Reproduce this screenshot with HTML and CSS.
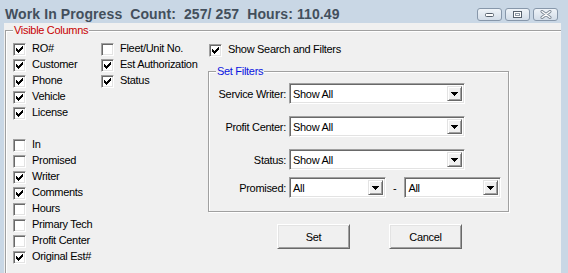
FILE: index.html
```html
<!DOCTYPE html>
<html lang="en">
<head>
    <meta charset="UTF-8">
    <title>Work In Progress</title>
    <link rel="stylesheet" href="styles.css">
</head>
<body>
<div class="window">
    <!-- title bar -->
    <div class="title-bar">
        <div class="title">Work In Progress  Count:  257/ 257  Hours: 110.49</div>
        <div class="win-buttons">
            <div class="win-btn">
                <svg width="9" height="4" viewBox="0 0 9 4"><rect x="0.5" y="0.5" width="8" height="3" rx="1" fill="#fff" stroke="#56616d"/></svg>
            </div>
            <div class="win-btn">
                <svg width="9" height="7" viewBox="0 0 9 7"><rect x="0.5" y="0.5" width="8" height="6" fill="#fff" stroke="#56616d"/><rect x="2.5" y="2.5" width="4" height="2" fill="none" stroke="#8d98a4"/></svg>
            </div>
            <div class="win-btn">
                <svg width="12" height="9" viewBox="0 0 12 9"><path d="M2 1.5L10 7.5M10 1.5L2 7.5" stroke="#7b8794" stroke-width="3" stroke-linecap="round"/><path d="M2 1.5L10 7.5M10 1.5L2 7.5" stroke="#fff" stroke-width="1.3" stroke-linecap="round"/></svg>
            </div>
        </div>
    </div>

    <div class="panel">
        <div class="group visible-columns">
            <span class="group-title red">Visible Columns</span>

            <div class="col col-main">
                <div class="check-row"><span class="chk"><svg class="tick" viewBox="0 0 7 7"><path d="M6 0h1v1h-1z M5 1h2v1h-2z M0 2h1v1h-1z M4 2h3v1h-3z M0 3h2v1h-2z M3 3h3v1h-3z M0 4h5v1h-5z M1 5h3v1h-3z M2 6h1v1h-1z"/></svg></span><span class="lbl">RO#</span></div>
                <div class="check-row"><span class="chk"><svg class="tick" viewBox="0 0 7 7"><path d="M6 0h1v1h-1z M5 1h2v1h-2z M0 2h1v1h-1z M4 2h3v1h-3z M0 3h2v1h-2z M3 3h3v1h-3z M0 4h5v1h-5z M1 5h3v1h-3z M2 6h1v1h-1z"/></svg></span><span class="lbl">Customer</span></div>
                <div class="check-row"><span class="chk"><svg class="tick" viewBox="0 0 7 7"><path d="M6 0h1v1h-1z M5 1h2v1h-2z M0 2h1v1h-1z M4 2h3v1h-3z M0 3h2v1h-2z M3 3h3v1h-3z M0 4h5v1h-5z M1 5h3v1h-3z M2 6h1v1h-1z"/></svg></span><span class="lbl">Phone</span></div>
                <div class="check-row"><span class="chk"><svg class="tick" viewBox="0 0 7 7"><path d="M6 0h1v1h-1z M5 1h2v1h-2z M0 2h1v1h-1z M4 2h3v1h-3z M0 3h2v1h-2z M3 3h3v1h-3z M0 4h5v1h-5z M1 5h3v1h-3z M2 6h1v1h-1z"/></svg></span><span class="lbl">Vehicle</span></div>
                <div class="check-row"><span class="chk"><svg class="tick" viewBox="0 0 7 7"><path d="M6 0h1v1h-1z M5 1h2v1h-2z M0 2h1v1h-1z M4 2h3v1h-3z M0 3h2v1h-2z M3 3h3v1h-3z M0 4h5v1h-5z M1 5h3v1h-3z M2 6h1v1h-1z"/></svg></span><span class="lbl">License</span></div>
                <div class="check-row blank"></div>
                <div class="check-row"><span class="chk"></span><span class="lbl">In</span></div>
                <div class="check-row"><span class="chk"></span><span class="lbl">Promised</span></div>
                <div class="check-row"><span class="chk"><svg class="tick" viewBox="0 0 7 7"><path d="M6 0h1v1h-1z M5 1h2v1h-2z M0 2h1v1h-1z M4 2h3v1h-3z M0 3h2v1h-2z M3 3h3v1h-3z M0 4h5v1h-5z M1 5h3v1h-3z M2 6h1v1h-1z"/></svg></span><span class="lbl">Writer</span></div>
                <div class="check-row"><span class="chk"><svg class="tick" viewBox="0 0 7 7"><path d="M6 0h1v1h-1z M5 1h2v1h-2z M0 2h1v1h-1z M4 2h3v1h-3z M0 3h2v1h-2z M3 3h3v1h-3z M0 4h5v1h-5z M1 5h3v1h-3z M2 6h1v1h-1z"/></svg></span><span class="lbl">Comments</span></div>
                <div class="check-row"><span class="chk"></span><span class="lbl">Hours</span></div>
                <div class="check-row"><span class="chk"></span><span class="lbl">Primary Tech</span></div>
                <div class="check-row"><span class="chk"></span><span class="lbl">Profit Center</span></div>
                <div class="check-row"><span class="chk"><svg class="tick" viewBox="0 0 7 7"><path d="M6 0h1v1h-1z M5 1h2v1h-2z M0 2h1v1h-1z M4 2h3v1h-3z M0 3h2v1h-2z M3 3h3v1h-3z M0 4h5v1h-5z M1 5h3v1h-3z M2 6h1v1h-1z"/></svg></span><span class="lbl">Original Est#</span></div>
            </div>

            <div class="col col-extra">
                <div class="check-row"><span class="chk"></span><span class="lbl">Fleet/Unit No.</span></div>
                <div class="check-row"><span class="chk"><svg class="tick" viewBox="0 0 7 7"><path d="M6 0h1v1h-1z M5 1h2v1h-2z M0 2h1v1h-1z M4 2h3v1h-3z M0 3h2v1h-2z M3 3h3v1h-3z M0 4h5v1h-5z M1 5h3v1h-3z M2 6h1v1h-1z"/></svg></span><span class="lbl">Est Authorization</span></div>
                <div class="check-row"><span class="chk"><svg class="tick" viewBox="0 0 7 7"><path d="M6 0h1v1h-1z M5 1h2v1h-2z M0 2h1v1h-1z M4 2h3v1h-3z M0 3h2v1h-2z M3 3h3v1h-3z M0 4h5v1h-5z M1 5h3v1h-3z M2 6h1v1h-1z"/></svg></span><span class="lbl">Status</span></div>
            </div>

            <div class="col col-filters">
                <div class="check-row show-search"><span class="chk"><svg class="tick" viewBox="0 0 7 7"><path d="M6 0h1v1h-1z M5 1h2v1h-2z M0 2h1v1h-1z M4 2h3v1h-3z M0 3h2v1h-2z M3 3h3v1h-3z M0 4h5v1h-5z M1 5h3v1h-3z M2 6h1v1h-1z"/></svg></span><span class="lbl">Show Search and Filters</span></div>

                <div class="group set-filters">
                    <span class="group-title blue">Set Filters</span>
                    <div class="filter-row">
                        <label>Service Writer:</label>
                        <div class="combo"><span class="value">Show All</span><span class="arrow"><svg width="7" height="4" viewBox="0 0 7 4"><path d="M0 0h7v1H0z M1 1h5v1H1z M2 2h3v1H2z M3 3h1v1H3z"/></svg></span></div>
                    </div>
                    <div class="filter-row">
                        <label>Profit Center:</label>
                        <div class="combo"><span class="value">Show All</span><span class="arrow"><svg width="7" height="4" viewBox="0 0 7 4"><path d="M0 0h7v1H0z M1 1h5v1H1z M2 2h3v1H2z M3 3h1v1H3z"/></svg></span></div>
                    </div>
                    <div class="filter-row">
                        <label>Status:</label>
                        <div class="combo"><span class="value">Show All</span><span class="arrow"><svg width="7" height="4" viewBox="0 0 7 4"><path d="M0 0h7v1H0z M1 1h5v1H1z M2 2h3v1H2z M3 3h1v1H3z"/></svg></span></div>
                    </div>
                    <div class="filter-row dates">
                        <label>Promised:</label>
                        <div class="combo short"><span class="value">All</span><span class="arrow"><svg width="7" height="4" viewBox="0 0 7 4"><path d="M0 0h7v1H0z M1 1h5v1H1z M2 2h3v1H2z M3 3h1v1H3z"/></svg></span></div>
                        <span class="dash">-</span>
                        <div class="combo short"><span class="value">All</span><span class="arrow"><svg width="7" height="4" viewBox="0 0 7 4"><path d="M0 0h7v1H0z M1 1h5v1H1z M2 2h3v1H2z M3 3h1v1H3z"/></svg></span></div>
                    </div>
                </div>

                <div class="actions">
                    <button class="btn">Set</button>
                    <button class="btn">Cancel</button>
                </div>
            </div>
        </div>
    </div>
</div>
</body>
</html>
```

FILE: styles.css
```css
body {
    margin: 0;
    font-family: "Liberation Sans", Arial, sans-serif;
    font-size: 11px;
    letter-spacing: -0.3px;
    color: #000;
}

.window {
    width: 568px;
    height: 273px;
    background-color: #c9d7e5;
    overflow: hidden;
}

/* title bar */
.title-bar {
    height: 23px;
    display: flex;
    align-items: flex-start;
}

.title {
    padding: 6px 0 0 5px;
    font-size: 14px;
    line-height: 17px;
    font-weight: bold;
    letter-spacing: 0.1px;
    color: #434f5c;
    white-space: pre;
}

.win-buttons {
    display: flex;
    gap: 3px;
    margin: 8px 10px 0 auto;
}

.win-btn {
    width: 25px;
    height: 13px;
    box-sizing: border-box;
    border: 1px solid #8797aa;
    border-radius: 3px;
    background: linear-gradient(#eef3f8, #d3dde8);
    display: flex;
    align-items: center;
    justify-content: center;
}

.win-btn svg {
    display: block;
}

/* client area */
.panel {
    margin-left: 4px;
    width: 557px;
    height: 250px;
    box-sizing: border-box;
    padding: 7px 0 0 1px;
    background-color: #f0f0f0;
    overflow: hidden;
}

.group {
    position: relative;
    box-sizing: border-box;
    border: 1px solid #a0a0a0;
    box-shadow: inset 1px 1px 0 #fff, 1px 1px 0 #fff;
}

.group-title {
    position: absolute;
    top: -7px;
    left: 7px;
    padding: 0 1px;
    line-height: 13px;
    background-color: #f0f0f0;
}

.red {
    color: #c80000;
}

.blue {
    color: #0a14e0;
}

.visible-columns {
    width: 570px;
    height: 260px;
    display: flex;
    padding: 12px 0 0 7px;
}

.col-main {
    width: 88px;
}

.col-extra {
    width: 107px;
}

.check-row {
    display: flex;
    height: 16px;
}

.chk {
    flex: none;
    width: 13px;
    height: 13px;
    box-sizing: border-box;
    padding: 2px;
    border: 1px solid;
    border-color: #a0a0a0 #fff #fff #a0a0a0;
    box-shadow: inset 1px 1px 0 #696969, inset -1px -1px 0 #e3e3e3;
    background-color: #fff;
}

.tick {
    display: block;
    width: 7px;
    height: 7px;
    shape-rendering: crispEdges;
}

.lbl {
    margin: -1px 0 0 6px;
    line-height: 13px;
    white-space: nowrap;
}

.show-search {
    margin: 1px 0 0 1px;
}

/* filters */
.set-filters {
    width: 301px;
    height: 141px;
    margin-top: 11px;
    padding-top: 11px;
}

.filter-row {
    display: flex;
    align-items: center;
    height: 21px;
    margin-top: 12px;
}

.filter-row:first-of-type {
    margin-top: 0;
}

.filter-row.dates {
    margin-top: 7px;
}

.filter-row label {
    width: 77px;
    margin-right: 3px;
    text-align: right;
    white-space: nowrap;
}

.combo {
    width: 176px;
    height: 21px;
    box-sizing: border-box;
    display: flex;
    align-items: center;
    padding: 2px 1px 2px 3px;
    border: 1px solid;
    border-color: #a0a0a0 #fff #fff #a0a0a0;
    box-shadow: inset 1px 1px 0 #696969, inset -1px -1px 0 #e3e3e3;
    background-color: #fff;
}

.combo.short {
    width: 97px;
}

.combo .value {
    flex: 1;
}

.arrow {
    width: 15px;
    height: 15px;
    box-sizing: border-box;
    margin-right: 1px;
    display: flex;
    align-items: center;
    justify-content: center;
    border: 1px solid;
    border-color: #e3e3e3 #696969 #696969 #e3e3e3;
    box-shadow: inset 1px 1px 0 #fff, inset -1px -1px 0 #a0a0a0;
    background-color: #f0f0f0;
}

.arrow svg {
    display: block;
    shape-rendering: crispEdges;
}

.dash {
    margin: 0 8px 0 7px;
}

.actions {
    display: flex;
    gap: 39px;
    margin-top: 12px;
    padding-left: 69px;
}

.btn {
    width: 73px;
    height: 25px;
    box-sizing: border-box;
    padding: 0;
    border: 1px solid;
    border-color: #fff #696969 #696969 #fff;
    box-shadow: inset 1px 1px 0 #e3e3e3, inset -1px -1px 0 #a0a0a0;
    background-color: #f0f0f0;
    font-family: inherit;
    font-size: 11px;
    letter-spacing: -0.3px;
    color: #000;
}
```
